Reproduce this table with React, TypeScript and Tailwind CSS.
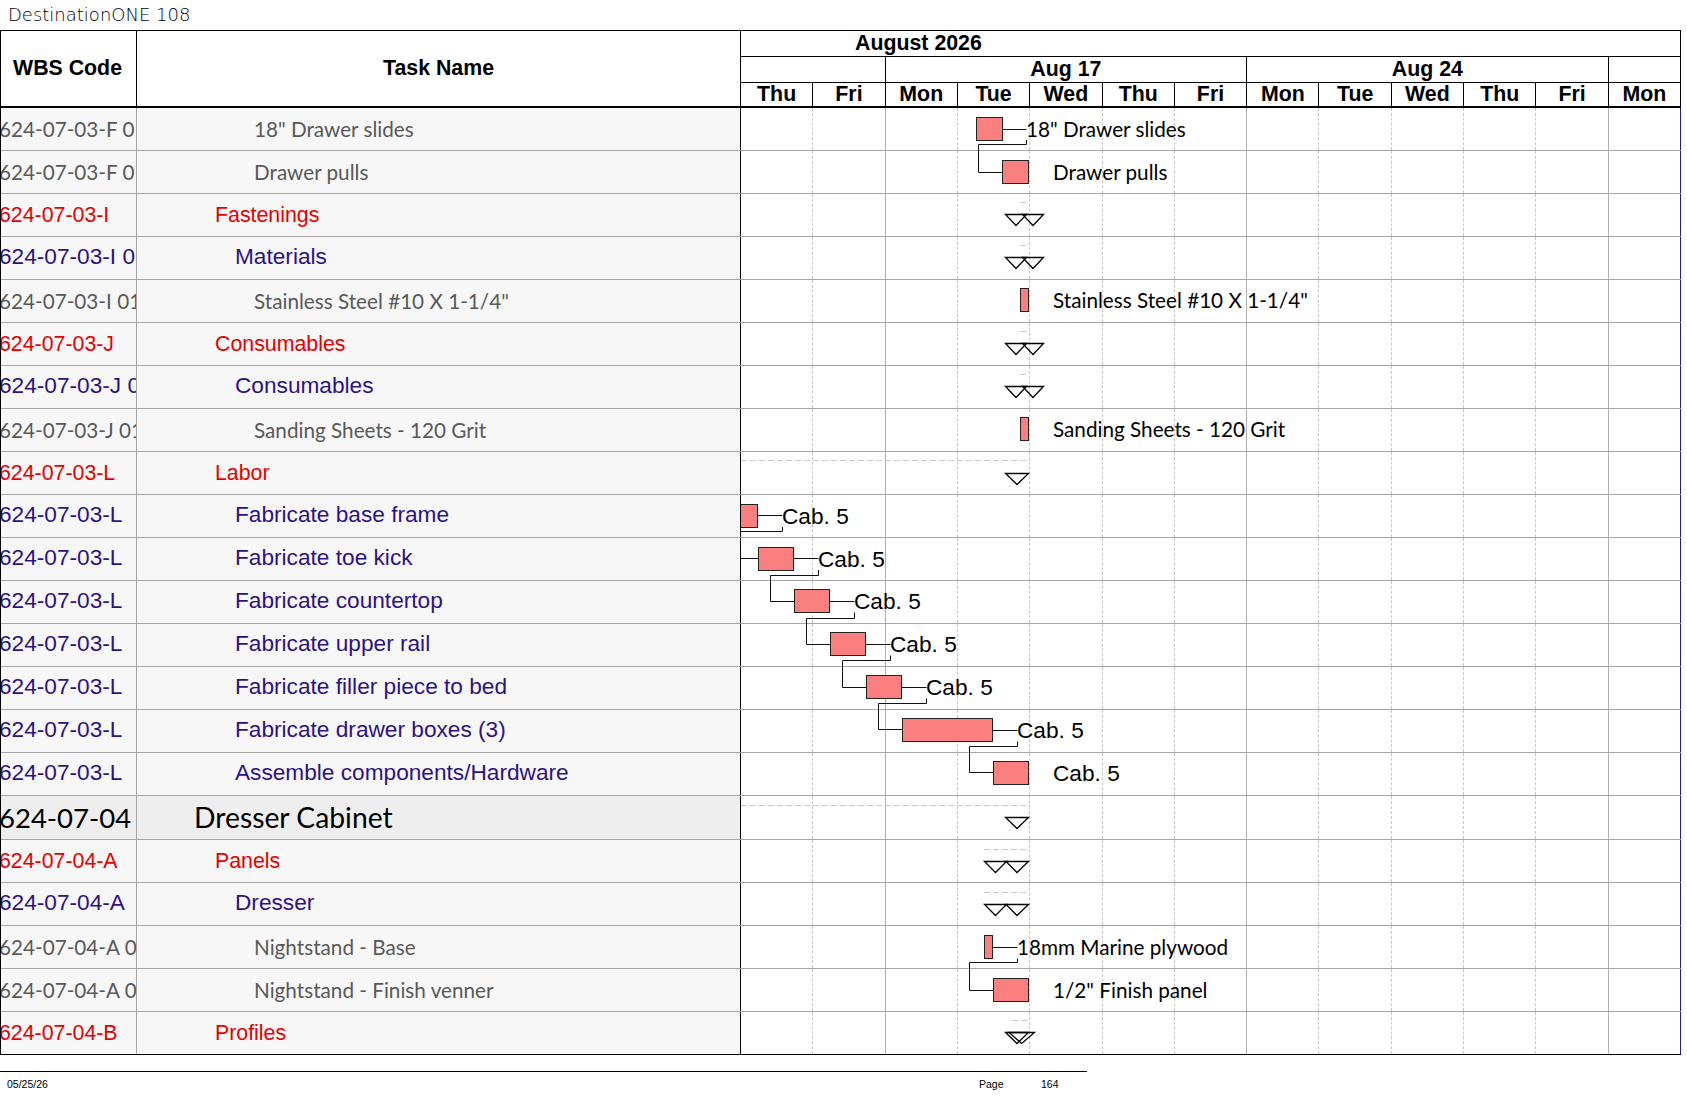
import React from 'react';

type Lvl = 'item' | 'red' | 'purple' | 'top';
const rows: { code: string; name: string; lvl: Lvl }[] = [
  { code: '624-07-03-F 01 001', name: '18" Drawer slides', lvl: 'item' },
  { code: '624-07-03-F 01 002', name: 'Drawer pulls', lvl: 'item' },
  { code: '624-07-03-I', name: 'Fastenings', lvl: 'red' },
  { code: '624-07-03-I 01', name: 'Materials', lvl: 'purple' },
  { code: '624-07-03-I 01 001', name: 'Stainless Steel #10 X 1-1/4"', lvl: 'item' },
  { code: '624-07-03-J', name: 'Consumables', lvl: 'red' },
  { code: '624-07-03-J 01', name: 'Consumables', lvl: 'purple' },
  { code: '624-07-03-J 01 001', name: 'Sanding Sheets - 120 Grit', lvl: 'item' },
  { code: '624-07-03-L', name: 'Labor', lvl: 'red' },
  { code: '624-07-03-L', name: 'Fabricate base frame', lvl: 'purple' },
  { code: '624-07-03-L', name: 'Fabricate toe kick', lvl: 'purple' },
  { code: '624-07-03-L', name: 'Fabricate countertop', lvl: 'purple' },
  { code: '624-07-03-L', name: 'Fabricate upper rail', lvl: 'purple' },
  { code: '624-07-03-L', name: 'Fabricate filler piece to bed', lvl: 'purple' },
  { code: '624-07-03-L', name: 'Fabricate drawer boxes (3)', lvl: 'purple' },
  { code: '624-07-03-L', name: 'Assemble components/Hardware', lvl: 'purple' },
  { code: '624-07-04', name: 'Dresser Cabinet', lvl: 'top' },
  { code: '624-07-04-A', name: 'Panels', lvl: 'red' },
  { code: '624-07-04-A', name: 'Dresser', lvl: 'purple' },
  { code: '624-07-04-A 01', name: 'Nightstand - Base', lvl: 'item' },
  { code: '624-07-04-A 02', name: 'Nightstand - Finish venner', lvl: 'item' },
  { code: '624-07-04-B', name: 'Profiles', lvl: 'red' },
];

const dayNames = ['Thu', 'Fri', 'Mon', 'Tue', 'Wed', 'Thu', 'Fri', 'Mon', 'Tue', 'Wed', 'Thu', 'Fri', 'Mon'];

const codeCls: Record<Lvl, string> = {
  item: "pt-[1px] font-['Lato',sans-serif] text-[20.7px] text-[#595959]",
  red: 'pt-[2px] text-[21.33px] text-[#e60000]',
  purple: 'pb-[3px] text-[22.67px] text-[#2e1283]',
  top: "font-['Lato',sans-serif] text-[27.5px] text-black",
};
const nameCls: Record<Lvl, string> = {
  item: "pl-[117px] pt-[1px] font-['Lato',sans-serif] text-[20.7px] text-[#595959]",
  red: 'pl-[78px] pt-[2px] text-[21.33px] text-[#e60000]',
  purple: 'pl-[98px] pb-[3px] text-[22.67px] text-[#2e1283]',
  top: "pl-[57px] font-['Lato',sans-serif] text-[28.3px] text-black",
};

function DayCells() {
  return (
    <div className="grid grid-cols-13 w-[940px] shrink-0 h-full bg-white">
      {dayNames.map((d, i) => (
        <div
          key={i}
          className={
            i === 12
              ? 'border-r border-[#1c1c8a]'
              : i === 1 || i === 6 || i === 11
              ? 'border-r border-[#b0b0b0]'
              : 'border-r border-dashed border-[#c6c6c6]'
          }
        />
      ))}
    </div>
  );
}

const bars: number[][] = [
  [976.5, 117.5, 1002.5, 140.5],
  [1002.5, 160.5, 1028.5, 183.5],
  [1020.5, 288.5, 1028.5, 311.5],
  [1020.5, 417.5, 1028.5, 440.5],
  [739.5, 504.5, 757.5, 527.5],
  [758.5, 547.5, 793.5, 570.5],
  [794.5, 589.5, 829.5, 612.5],
  [830.5, 632.5, 865.5, 655.5],
  [866.5, 675.5, 901.5, 698.5],
  [902.5, 718.5, 992.5, 741.5],
  [993.5, 761.5, 1028.5, 784.5],
  [984.5, 935.5, 992.5, 958.5],
  [993.5, 978.5, 1028.5, 1001.5],
];

const lines: number[][] = [
  [1002.5, 129.5, 1026.5, 129.5],
  [1026.5, 140, 1026.5, 144.5, 978.5, 144.5, 978.5, 172.5, 1002.5, 172.5],
  [757.5, 515.5, 782.5, 515.5],
  [782.5, 527, 782.5, 531.5, 735, 531.5],
  [735, 558.5, 758.5, 558.5],
  [793.5, 558.5, 818.5, 558.5],
  [818.5, 570, 818.5, 575.5, 770.5, 575.5, 770.5, 601.5, 794.5, 601.5],
  [829.5, 601.5, 854.5, 601.5],
  [854.5, 612.5, 854.5, 618.5, 806.5, 618.5, 806.5, 644.5, 830.5, 644.5],
  [865.5, 644.5, 890.5, 644.5],
  [890.5, 655.5, 890.5, 660.5, 842.5, 660.5, 842.5, 687.5, 866.5, 687.5],
  [901.5, 687.5, 926.5, 687.5],
  [926.5, 698.5, 926.5, 703.5, 878.5, 703.5, 878.5, 729.5, 902.5, 729.5],
  [992.5, 730.5, 1017.5, 730.5],
  [1017.5, 741.5, 1017.5, 746.5, 969.5, 746.5, 969.5, 772.5, 993.5, 772.5],
  [992.5, 947.5, 1017.5, 947.5],
  [1017.5, 958.5, 1017.5, 962.5, 969.5, 962.5, 969.5, 990.5, 993.5, 990.5],
];

const labels: { x: number; y: number; t: string; arial?: boolean }[] = [
  { x: 1026, y: 129, t: '18" Drawer slides' },
  { x: 1053, y: 171.5, t: 'Drawer pulls' },
  { x: 1053, y: 300, t: 'Stainless Steel #10 X 1-1/4"' },
  { x: 1053, y: 429, t: 'Sanding Sheets - 120 Grit' },
  { x: 782, y: 515.5, t: 'Cab. 5', arial: true },
  { x: 818, y: 558.5, t: 'Cab. 5', arial: true },
  { x: 854, y: 601, t: 'Cab. 5', arial: true },
  { x: 890, y: 644, t: 'Cab. 5', arial: true },
  { x: 926, y: 687, t: 'Cab. 5', arial: true },
  { x: 1017, y: 730, t: 'Cab. 5', arial: true },
  { x: 1053, y: 773, t: 'Cab. 5', arial: true },
  { x: 1017, y: 946.5, t: '18mm Marine plywood' },
  { x: 1053, y: 990, t: '1/2" Finish panel' },
];

// x1, x2, yTop, yApex, apexX
const tris: number[][] = [
  [1005.5, 1026.5, 214.5, 225.5, 1016],
  [1022.5, 1043.5, 214.5, 225.5, 1033],
  [1005.5, 1026.5, 257.5, 268.5, 1016],
  [1022.5, 1043.5, 257.5, 268.5, 1033],
  [1005.5, 1026.5, 343.5, 354.5, 1016],
  [1022.5, 1043.5, 343.5, 354.5, 1033],
  [1005.5, 1026.5, 386.5, 397.5, 1016],
  [1022.5, 1043.5, 386.5, 397.5, 1033],
  [1005.5, 1028.5, 473.5, 484.5, 1017],
  [1005.5, 1028.5, 817.5, 828.5, 1017],
  [984.5, 1006.5, 861.5, 872.5, 995.5],
  [1006, 1028.5, 861.5, 872.5, 1017],
  [984.5, 1006.5, 904.5, 915.5, 995.5],
  [1006, 1028.5, 904.5, 915.5, 1017],
  [1005.5, 1028.5, 1032.5, 1043.5, 1017],
  [1009, 1034.5, 1032.5, 1043.5, 1021.7],
];

const dashes: number[][] = [
  [1020, 1027, 202.5],
  [1020, 1027, 245.5],
  [1020, 1027, 331.5],
  [1020, 1027, 374.5],
  [741, 1030, 460.5],
  [741, 1030, 805.5],
  [984, 1028, 849.5],
  [984, 1028, 892.5],
  [1012, 1028, 1020.5],
];

function ChartOverlay() {
  return (
    <svg
      className="absolute left-[740px] top-0 pointer-events-none"
      width={940}
      height={948}
      viewBox="741 108 940 948"
    >
      {dashes.map((d, i) => (
        <line key={'d' + i} x1={d[0]} x2={d[1]} y1={d[2]} y2={d[2]} stroke="#c8c8c8" strokeWidth={1} strokeDasharray="6 3" />
      ))}
      {lines.map((l, i) => (
        <polyline key={'l' + i} points={l.join(' ')} fill="none" stroke="#111" strokeWidth={1} />
      ))}
      {bars.map((b, i) => (
        <rect key={'b' + i} x={b[0]} y={b[1]} width={b[2] - b[0]} height={b[3] - b[1]} fill="#fa8080" stroke="#222" strokeWidth={1} />
      ))}
      {tris.map((t, i) => (
        <polygon
          key={'t' + i}
          points={`${t[0]},${t[2]} ${t[1]},${t[2]} ${t[4]},${t[3]}`}
          fill="none"
          stroke="#000"
          strokeWidth={1.3}
          strokeLinejoin="miter"
        />
      ))}
      {labels.map((l, i) => (
        <text
          key={'x' + i}
          x={l.x}
          y={l.y}
          dominantBaseline="central"
          fill="#000"
          fontFamily={l.arial ? "'Liberation Sans', Arial, sans-serif" : "Lato, sans-serif"}
          fontSize={l.arial ? 22.67 : 20.7}
        >
          {l.t}
        </text>
      ))}
    </svg>
  );
}

export default function App() {
  return (
    <div className="w-[1687px] h-[1097px] bg-white overflow-hidden font-['Liberation_Sans',Arial,sans-serif] text-black">
      <div className="h-[30px] flex items-center pl-[8px] font-['DejaVu_Sans',sans-serif] font-extralight text-[18px] text-black leading-none">
        DestinationONE 108
      </div>
      <div className="w-[1681px] border-t border-l border-black">
        {/* header */}
        <div className="flex h-[77px] border-b-2 border-black">
          <div className="w-[136px] shrink-0 border-r border-black flex items-center pl-[12px] font-bold text-[21.33px] leading-none">
            WBS Code
          </div>
          <div className="w-[604px] shrink-0 border-r border-black flex items-center justify-center font-bold text-[21.33px] leading-none">
            Task Name
          </div>
          <div className="w-[940px] shrink-0 flex flex-col font-bold text-[21.33px] leading-none">
            <div className="h-[26px] border-b border-r border-black flex items-center pl-[114px]">August 2026</div>
            <div className="h-[26px] border-b border-black grid grid-cols-13">
              <div className="col-span-2 border-r border-black" />
              <div className="col-span-5 border-r border-black flex items-center justify-center">Aug 17</div>
              <div className="col-span-5 border-r border-black flex items-center justify-center">Aug 24</div>
              <div className="col-span-1 border-r border-black" />
            </div>
            <div className="flex-1 grid grid-cols-13">
              {dayNames.map((d, i) => (
                <div key={i} className="border-r border-black flex items-center justify-center">
                  {d}
                </div>
              ))}
            </div>
          </div>
        </div>
        {/* body */}
        <div className="relative">
          {rows.map((r, i) => {
            const last = i === rows.length - 1;
            const top = r.lvl === 'top';
            return (
              <div
                key={i}
                className={`flex ${top ? 'h-[44px]' : 'h-[43px]'} border-b ${last ? 'border-black' : 'border-[#a6a6a6]'}`}
              >
                <div
                  className={`w-[136px] shrink-0 border-r border-[#a6a6a6] ${top ? 'bg-[#eeeeee]' : 'bg-[#f7f7f7]'} overflow-hidden flex items-center`}
                >
                  <span className={`-ml-[2px] whitespace-nowrap leading-none ${codeCls[r.lvl]}`}>{r.code}</span>
                </div>
                <div
                  className={`w-[604px] shrink-0 border-r border-black ${top ? 'bg-[#eeeeee]' : 'bg-[#f7f7f7]'} overflow-hidden flex items-center`}
                >
                  <span className={`whitespace-nowrap leading-none ${nameCls[r.lvl]}`}>{r.name}</span>
                </div>
                <DayCells />
              </div>
            );
          })}
          <ChartOverlay />
        </div>
      </div>
      <div className="mt-[16px] w-[1087px] border-t border-black flex items-center h-[26px] text-[10.5px] leading-none">
        <span className="w-[979px] pl-[7px]">05/25/26</span>
        <span className="w-[62px]">Page</span>
        <span>164</span>
      </div>
    </div>
  );
}
